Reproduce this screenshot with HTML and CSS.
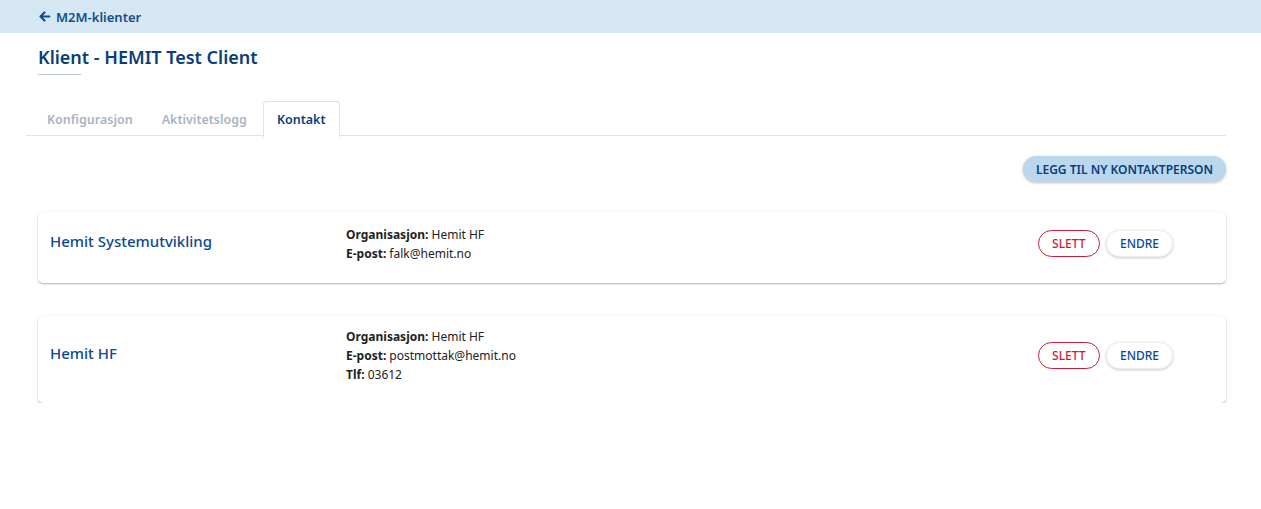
FILE: index.html
```html
<!DOCTYPE html>
<html lang="no">
<head>
<meta charset="utf-8">
<title>Klient - HEMIT Test Client</title>
<link rel="stylesheet" href="styles.css">
</head>
<body>
<header class="topbar">
  <a class="back" href="#">
    <svg class="back-icon" viewBox="0 0 16 16" width="13" height="13" aria-hidden="true"><path d="M14 8H3.5M8 3L3 8l5 5" fill="none" stroke="currentColor" stroke-width="2.6" stroke-linecap="round" stroke-linejoin="round"/></svg>
    <span>M2M-klienter</span>
  </a>
</header>
<main class="content">
  <h1 class="title">Klient - HEMIT Test Client</h1>
  <div class="title-rule"></div>
  <nav class="tabs">
    <a class="tab" href="#">Konfigurasjon</a>
    <a class="tab" href="#">Aktivitetslogg</a>
    <a class="tab active" href="#">Kontakt</a>
  </nav>
  <div class="toolbar">
    <button class="btn-add">LEGG TIL NY KONTAKTPERSON</button>
  </div>
  <section class="card">
    <h2 class="card-title">Hemit Systemutvikling</h2>
    <div class="info">
      <div><b>Organisasjon:</b> Hemit HF</div>
      <div><b>E-post:</b> falk@hemit.no</div>
    </div>
    <div class="actions">
      <button class="btn btn-delete">SLETT</button>
      <button class="btn btn-edit">ENDRE</button>
    </div>
  </section>
  <section class="card">
    <h2 class="card-title">Hemit HF</h2>
    <div class="info">
      <div><b>Organisasjon:</b> Hemit HF</div>
      <div><b>E-post:</b> postmottak@hemit.no</div>
      <div><b>Tlf:</b> 03612</div>
    </div>
    <div class="actions">
      <button class="btn btn-delete">SLETT</button>
      <button class="btn btn-edit">ENDRE</button>
    </div>
  </section>
</main>
</body>
</html>
```
FILE: styles.css
```css
* { box-sizing: border-box; }
html, body { margin: 0; padding: 0; background: #fff; }
body {
  font-family: "Noto Sans", "Open Sans", Arial, sans-serif;
  color: #1d1d1d;
}
.topbar {
  height: 33px;
  background: #d5e7f3;
  display: flex;
  align-items: center;
  padding-left: 38px;
}
.back {
  display: flex;
  align-items: center;
  gap: 5px;
  color: #144d8c;
  text-decoration: none;
  font-size: 13px;
  font-weight: 600;
}
.back-icon { display: block; }
.content {
  padding: 0 35px 0 38px;
}
.title {
  margin: 0;
  padding-top: 12px;
  font-size: 18px;
  line-height: 24px;
  font-weight: 600;
  color: #0b3d7a;
}
.title-rule {
  width: 43px;
  height: 1px;
  background: #b8c7dc;
  margin-top: 5px;
}
.tabs {
  display: flex;
  margin: 26px 0 0 -12px;
  padding-left: 7px;
  border-bottom: 1px solid #dfe2e7;
  height: 35px;
}
.tab {
  display: flex;
  align-items: center;
  padding: 0 13px;
  font-size: 12.5px;
  font-weight: 600;
  color: #a8b3c3;
  text-decoration: none;
  border: 1px solid transparent;
  border-bottom: none;
  border-radius: 4px 4px 0 0;
  height: 35px;
}
.tab + .tab { margin-left: 1px; }
.tab.active {
  color: #0b3d7a;
  border-color: #dfe2e7;
  background: #fff;
  margin-bottom: -1px;
  margin-left: 2px;
  height: 36px;
}
.toolbar {
  display: flex;
  justify-content: flex-end;
  margin-top: 20px;
}
.btn-add {
  font-family: inherit;
  height: 26px;
  padding: 0 13px;
  border: none;
  border-radius: 13px;
  background: #bad7ee;
  color: #0b3d7a;
  font-size: 12px;
  font-weight: 600;
  box-shadow: 0 1px 3px rgba(0,0,0,0.25);
}
.card {
  display: grid;
  grid-template-columns: 296px 1fr auto;
  align-items: center;
  min-height: 71px;
  margin-top: 30px;
  padding: 11px 12px 19px;
  border-radius: 5px;
  background: #fff;
  box-shadow: 0 1px 2px rgba(0,0,0,0.3), 0 0 3px rgba(0,0,0,0.04);
}
.card + .card { margin-top: 33px; }
.card-title {
  margin: 0 0 6px;
  font-size: 15px;
  font-weight: 500;
  color: #0b4a8f;
}
.info {
  font-size: 12px;
  line-height: 19px;
  color: #222;
}
.info b { font-weight: 700; }
.actions {
  display: flex;
  gap: 6px;
  padding-right: 41px;
}
.btn {
  font-family: inherit;
  height: 27px;
  border-radius: 14px;
  font-size: 12px;
  font-weight: 500;
  background: #fff;
  padding: 0 13.5px;
}
.btn-delete {
  border: 1px solid #c81e3c;
  color: #c81e3c;
}
.btn-edit {
  border: 1px solid #eceef1;
  color: #0b4a8f;
  box-shadow: 0 1px 3px rgba(0,0,0,0.2);
  padding: 0 13px;
}
```
